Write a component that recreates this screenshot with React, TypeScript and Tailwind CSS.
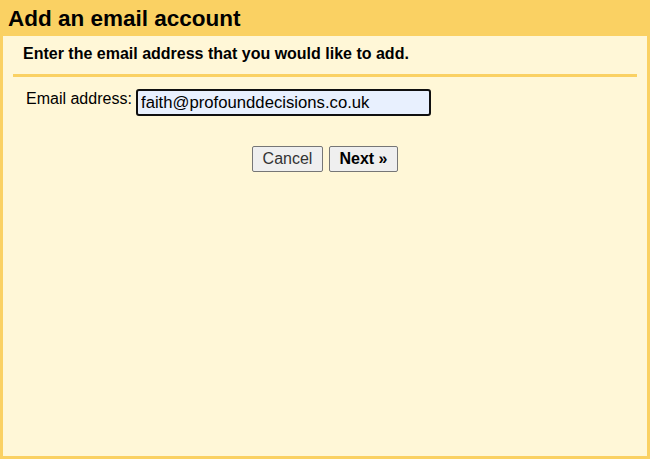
export default function App() {
  return (
    <div className="w-[650px] h-[459px] flex flex-col bg-[#FFF7D7] font-['Liberation_Sans',Arial,sans-serif] text-black">
      <div className="h-[36px] shrink-0 bg-[#FAD163] px-[8px] flex items-center">
        <h1 className="text-[22.5px] leading-[24px] font-bold pt-[1px]">Add an email account</h1>
      </div>
      <div className="flex-1 border-x-[3px] border-b-[3px] border-[#FAD163] px-[10px] pt-[9px]">
        <p className="pl-[10px] text-[16px] leading-[18px] font-bold">
          Enter the email address that you would like to add.
        </p>
        <div className="mt-[11px] h-[3px] bg-[#FAD163]" />
        <div className="mt-[12px] flex items-start pl-[13px]">
          <label className="text-[16px] leading-[18px] w-[110px] pt-[1px]">Email address:</label>
          <input
            readOnly
            value="faith@profounddecisions.co.uk"
            className="w-[295px] h-[27px] border-2 border-[#101010] rounded-[3px] bg-[#E8F0FE] px-[3px] text-[16.7px] outline-none"
          />
        </div>
        <div className="mt-[30px] flex justify-center gap-[6px]">
          <button className="w-[71px] h-[26px] bg-[#EFEFEF] border border-[#767676] rounded-[2px] text-[16px] text-[#333]">
            Cancel
          </button>
          <button className="w-[69px] h-[26px] bg-[#EFEFEF] border border-[#767676] rounded-[2px] text-[16px] font-bold">
            Next »
          </button>
        </div>
      </div>
    </div>
  );
}
